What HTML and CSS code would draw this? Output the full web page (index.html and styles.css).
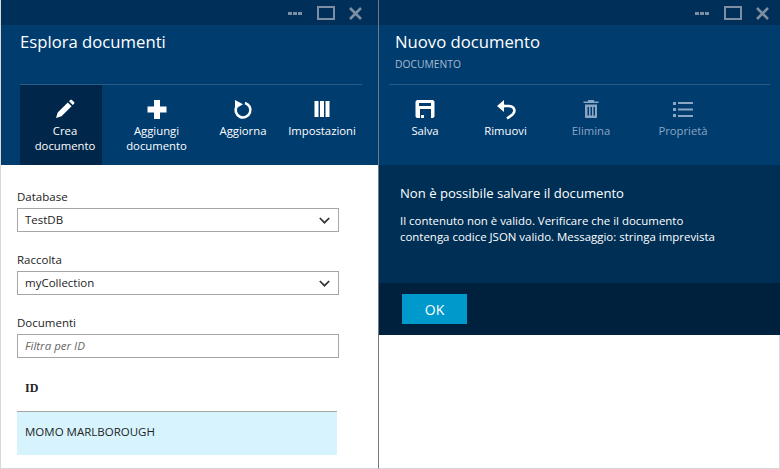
FILE: index.html
```html
<!DOCTYPE html>
<html lang="it">
<head>
<meta charset="utf-8">
<title>Esplora documenti</title>
<link rel="stylesheet" href="styles.css">
</head>
<body>
<div class="desk">
  <section class="blade blade-left">
    <div class="bar">
      <svg class="win" width="74" height="14" viewBox="0 0 74 14"><g fill="#7f8fa3"><rect x="0" y="6" width="4" height="3"/><rect x="5" y="6" width="4" height="3"/><rect x="10" y="6" width="4" height="3"/></g><rect x="30" y="1" width="16" height="12" fill="none" stroke="#7f8fa3" stroke-width="2"/><path d="M62 2l11 11M73 2L62 13" fill="none" stroke="#7f8fa3" stroke-width="2.600"/></svg>
    </div>
    <header class="head head-left">
      <h1 class="title">Esplora documenti</h1>
      <div class="rule"></div>
      <nav class="cmds">
        <div class="cmd cmd-active col-create">
          <svg class="ico" width="22" height="22" viewBox="0 0 22 22"><path d="M2 20l1.700-5.500L13.800 4.400l3.800 3.800L7.500 18.300z M15 3.200l1.200-1.200c.5-.5 1.200-.5 1.700 0l2.100 2.100c.5.500.5 1.200 0 1.700l-1.200 1.200z" fill="#fff"/></svg>
          <span>Crea documento</span>
        </div>
        <div class="cmd col-add">
          <svg class="ico" width="22" height="22" viewBox="0 0 22 22"><path d="M8 2h6v6.500h6.500v6H14V21H8v-6.500H1.500v-6H8z" fill="#fff"/></svg>
          <span>Aggiungi documento</span>
        </div>
        <div class="cmd col-refresh">
          <svg class="ico" width="22" height="22" viewBox="0 0 22 22"><path d="M13 4.900A7.400 7.400 0 1 1 4.600 8.300" fill="none" stroke="#fff" stroke-width="2.600"/><path d="M3 2l8 4.300-8 4.700z" fill="#fff"/></svg>
          <span>Aggiorna</span>
        </div>
        <div class="cmd col-settings">
          <svg class="ico" width="22" height="22" viewBox="0 0 22 22"><g fill="#fff"><rect x="3.500" y="3" width="4" height="16"/><rect x="9" y="3" width="4" height="16"/><rect x="14.500" y="3" width="4" height="16"/></g></svg>
          <span>Impostazioni</span>
        </div>
      </nav>
    </header>
    <div class="body">
      <label class="lbl">Database</label>
      <div class="field"><span>TestDB</span><svg width="11" height="7" viewBox="0 0 11 7"><path d="M.8 1l4.700 4.700L10.200 1" fill="none" stroke="#333" stroke-width="1.700"/></svg></div>
      <label class="lbl l2">Raccolta</label>
      <div class="field"><span>myCollection</span><svg width="11" height="7" viewBox="0 0 11 7"><path d="M.8 1l4.700 4.700L10.200 1" fill="none" stroke="#333" stroke-width="1.700"/></svg></div>
      <label class="lbl l2">Documenti</label>
      <div class="field filter"><span>Filtra per ID</span></div>
      <div class="th">ID</div>
      <div class="row">MOMO MARLBOROUGH</div>
    </div>
  </section>
  <section class="blade blade-right">
    <div class="bar bar-right">
      <svg class="win" width="74" height="14" viewBox="0 0 74 14"><g fill="#7f8fa3"><rect x="0" y="6" width="4" height="3"/><rect x="5" y="6" width="4" height="3"/><rect x="10" y="6" width="4" height="3"/></g><rect x="30" y="1" width="16" height="12" fill="none" stroke="#7f8fa3" stroke-width="2"/><path d="M62 2l11 11M73 2L62 13" fill="none" stroke="#7f8fa3" stroke-width="2.600"/></svg>
    </div>
    <header class="head head-right">
      <h1 class="title">Nuovo documento</h1>
      <div class="sub">DOCUMENTO</div>
      <div class="rule rule-right"></div>
      <nav class="cmds cmds-right">
        <div class="cmd col-save">
          <svg class="ico" width="22" height="22" viewBox="0 0 22 22"><path d="M3.500 2h15c1 0 2 1 2 2v14c0 1-1 2-2 2H17v-9H6v9H3.500c-1 0-2-1-2-2V4c0-1 1-2 2-2zM5 5v3h12V5zM7 17h3v3H7z" fill="#fff" fill-rule="evenodd"/></svg>
          <span>Salva</span>
        </div>
        <div class="cmd col-undo">
          <svg class="ico" width="22" height="22" viewBox="0 0 22 22"><path d="M8 8h5.500c6 0 7.500 5 4 8.500L12 20.500" fill="none" stroke="#fff" stroke-width="2.600"/><path d="M9 2v4l1 2-1 2v4L2 8z" fill="#fff"/></svg>
          <span>Rimuovi</span>
        </div>
        <div class="cmd off col-delete">
          <svg class="ico" width="22" height="22" viewBox="0 0 22 22"><path d="M3.500 3.500h15V5h-15zM8 2h6v1.500H8zM5 6.500h12V19c0 .6-.4 1-1 1H6c-.6 0-1-.4-1-1zM7.500 9v8.500H9V9zm3 0v8.500H12V9zm3 0v8.500H15V9z" fill="#8ba6c2" fill-rule="evenodd"/></svg>
          <span>Elimina</span>
        </div>
        <div class="cmd off col-props">
          <svg class="ico" width="22" height="22" viewBox="0 0 22 22"><g fill="#8ba6c2"><rect x="1" y="4" width="3" height="3"/><rect x="1" y="10" width="3" height="3"/><rect x="1" y="16" width="3" height="3"/><rect x="6" y="4" width="15" height="2"/><rect x="6" y="10.500" width="15" height="2"/><rect x="6" y="17" width="15" height="2"/></g></svg>
          <span>Proprietà</span>
        </div>
      </nav>
    </header>
    <div class="msg">
      <h2 class="msg-title">Non è possibile salvare il documento</h2>
      <p class="msg-text">Il contenuto non è valido. Verificare che il documento<br>contenga codice JSON valido. Messaggio: stringa imprevista</p>
    </div>
    <div class="foot"><button class="ok">OK</button></div>
    <div class="blank"></div>
  </section>
</div>
</body>
</html>
```

FILE: styles.css
```css
* { box-sizing: border-box; }
html, body { margin: 0; padding: 0; }
body { width: 780px; height: 469px; overflow: hidden; background: #fff; font-family: "Open Sans", "Noto Sans", sans-serif; }
.desk { display: flex; height: 469px; }
.blade { display: flex; flex-direction: column; background: #fff; }
.blade-left { width: 379px; border-left: 1px solid #d8d8d8; border-right: 1px solid #6f7a85; border-bottom: 1px solid #d8d8d8; }
.blade-right { width: 401px; }
.bar { height: 25px; background: #003059; display: flex; justify-content: flex-end; align-items: center; flex: none; padding-right: 16px; padding-top: 1px; }
.bar-right { padding-right: 11px; }
.win { display: block; }
.head { height: 140px; background: #003c6e; flex: none; display: flex; flex-direction: column; }
.head-left { padding: 0 16px 0 19px; }
.head-right { padding: 0 10px; }
.title { margin: 0; font-weight: 400; font-size: 16.700px; line-height: 22px; color: #fff; padding-top: 6px; height: 28px; }
.head-right .title { padding-left: 6px; }
.sub { font-size: 10.300px; line-height: 14px; color: #a6bbd0; padding-left: 6px; margin-top: 4px; }
.rule { height: 1px; background: #2a5a86; margin-top: 31px; flex: none; }
.rule-right { margin-top: 13px; }
.cmds { display: flex; height: 80px; flex: none; }
.cmd { display: flex; flex-direction: column; align-items: center; color: #fff; font-size: 11.300px; line-height: 15px; text-align: center; padding-top: 13px; flex: none; }
.cmd .ico { display: block; flex: none; margin-bottom: 3px; }
.cmd span { display: block; }
.cmd-active { background: #00264a; }
.off { color: #8ba6c2; }
.col-create { width: 82px; padding-left: 8px; }
.col-add { width: 109px; padding: 13px 16px 0; }
.col-refresh { width: 64px; }
.col-settings { width: 88px; padding-left: 6px; }
.cmds-right { padding-left: 6px; }
.col-save { width: 60px; }
.col-undo { width: 101px; }
.col-delete { width: 70px; }
.col-props { width: 114px; }
.body { flex: 1; padding: 24px 39px 0 16px; }
.lbl { display: block; font-size: 11.500px; line-height: 16px; color: #222; }
.l2 { margin-top: 20px; }
.field { display: flex; justify-content: space-between; align-items: center; height: 24px; margin-top: 3px; border: 1px solid #a6a6a6; padding: 0 8px 2px 7px; font-size: 11.500px; color: #222; }
.field svg { margin-top: 2px; }
.filter { font-style: italic; color: #666; }
.th { font-family: "Liberation Serif", serif; font-weight: 700; font-size: 12px; line-height: 16px; color: #222; padding: 22px 0 0 8px; height: 53px; }
.row { width: 320px; height: 44px; background: #d7f4fe; border-top: 1px solid #a6a6a6; padding: 0 8px 5px; display: flex; align-items: center; font-size: 11.500px; color: #222; }
.msg { height: 118px; background: #002f56; padding: 18px 21px 0; flex: none; color: #fff; }
.msg-title { margin: 0; font-weight: 400; font-size: 13.100px; line-height: 20px; }
.msg-text { margin: 10px 0 0; font-size: 11.450px; line-height: 16px; }
.foot { height: 52px; background: #00213e; padding: 11px 0 0 23px; flex: none; }
.ok { display: block; width: 65px; height: 30px; background: #0099cc; color: #fff; border: 0; padding: 0; font: 400 14px "Open Sans", "Noto Sans", sans-serif; }
.blank { flex: 1; border-right: 1px solid #d8d8d8; border-bottom: 1px solid #d8d8d8; }
```
